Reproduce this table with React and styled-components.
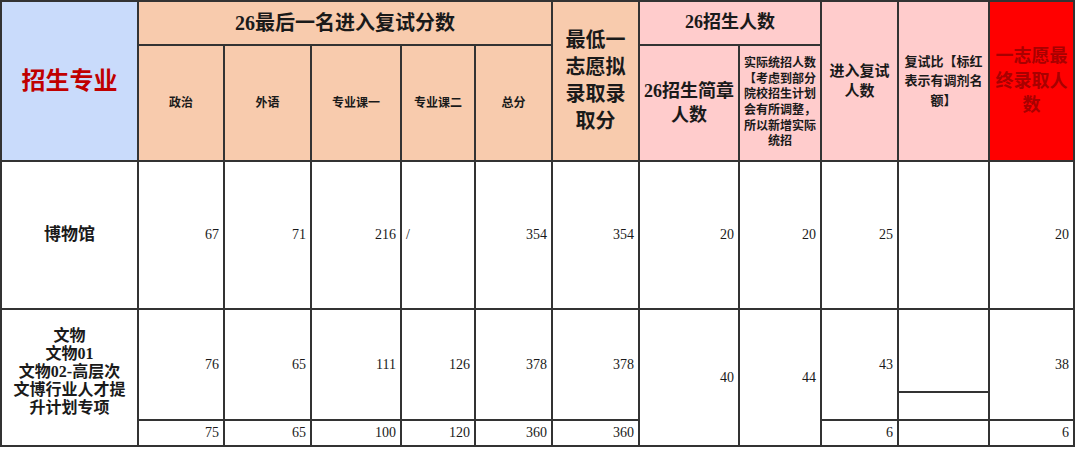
import React from 'react';
import styled, { createGlobalStyle } from 'styled-components';

const GlobalStyle = createGlobalStyle`
  html, body {
    margin: 0;
    padding: 0;
    background: #ffffff;
  }
  body {
    font-family: "Liberation Serif", "Noto Sans CJK SC", serif;
  }
`;

const BLUE = '#c9dbfb';
const PEACH = '#f8cbad';
const PINK = '#ffcccc';
const RED = '#ff0000';

const headers = [
  { col: '1', row: '1 / 3', bg: BLUE, size: 24, color: '#c00000', lines: ['招生专业'] },
  { col: '2 / 7', row: '1', bg: PEACH, size: 20, lines: ['26最后一名进入复试分数'] },
  { col: '2', row: '2', bg: PEACH, size: 12, lines: ['政治'] },
  { col: '3', row: '2', bg: PEACH, size: 12, lines: ['外语'] },
  { col: '4', row: '2', bg: PEACH, size: 12, lines: ['专业课一'] },
  { col: '5', row: '2', bg: PEACH, size: 12, lines: ['专业课二'] },
  { col: '6', row: '2', bg: PEACH, size: 12, lines: ['总分'] },
  { col: '7', row: '1 / 3', bg: PEACH, size: 20, lh: 27, lines: ['最低一', '志愿拟', '录取录', '取分'] },
  { col: '8 / 10', row: '1', bg: PINK, size: 18, lines: ['26招生人数'] },
  { col: '8', row: '2', bg: PINK, size: 18, lh: 24, lines: ['26招生简章', '人数'] },
  {
    col: '9', row: '2', bg: PINK, size: 12, lh: 15.6,
    lines: ['实际统招人数', '【考虑到部分', '院校招生计划', '会有所调整，', '所以新增实际', '统招']
  },
  { col: '10', row: '1 / 3', bg: PINK, size: 15, lh: 20, lines: ['进入复试', '人数'] },
  { col: '11', row: '1 / 3', bg: PINK, size: 13, lh: 19.5, lines: ['复试比【标红', '表示有调剂名', '额】'] },
  { col: '12', row: '1 / 3', bg: RED, size: 18, lh: 24.5, color: '#a80000', lines: ['一志愿最', '终录取人', '数'] }
];

const cells = [
  // 博物馆
  { col: '2', row: '3', value: '67' },
  { col: '3', row: '3', value: '71' },
  { col: '4', row: '3', value: '216' },
  { col: '5', row: '3', value: '/', align: 'left' },
  { col: '6', row: '3', value: '354' },
  { col: '7', row: '3', value: '354' },
  { col: '8', row: '3', value: '20' },
  { col: '9', row: '3', value: '20' },
  { col: '10', row: '3', value: '25' },
  { col: '11', row: '3', value: '' },
  { col: '12', row: '3', value: '20' },
  // 文物
  { col: '2', row: '4 / 6', value: '76' },
  { col: '3', row: '4 / 6', value: '65' },
  { col: '4', row: '4 / 6', value: '111' },
  { col: '5', row: '4 / 6', value: '126' },
  { col: '6', row: '4 / 6', value: '378' },
  { col: '7', row: '4 / 6', value: '378' },
  { col: '8', row: '4 / 7', value: '40' },
  { col: '9', row: '4 / 7', value: '44' },
  { col: '10', row: '4 / 6', value: '43' },
  { col: '11', row: '4', value: '' },
  { col: '11', row: '5', value: '' },
  { col: '12', row: '4 / 6', value: '38' },
  { col: '2', row: '6', value: '75' },
  { col: '3', row: '6', value: '65' },
  { col: '4', row: '6', value: '100' },
  { col: '5', row: '6', value: '120' },
  { col: '6', row: '6', value: '360' },
  { col: '7', row: '6', value: '360' },
  { col: '10', row: '6', value: '6' },
  { col: '11', row: '6', value: '' },
  { col: '12', row: '6', value: '6' }
];

export default function App() {
  return (
    <>
      <GlobalStyle />
      <Table>
        {headers.map((h, i) => (
          <HeadCell
            key={`head-${i}`}
            $col={h.col}
            $row={h.row}
            $bg={h.bg}
            $size={h.size}
            $lh={h.lh}
            $color={h.color}
          >
            <div>
              {h.lines.map((line, j) => (
                <Line key={j}>{line}</Line>
              ))}
            </div>
          </HeadCell>
        ))}

        <NameCell $col="1" $row="3" $size={17}>博物馆</NameCell>
        <NameCell $col="1" $row="4 / 7" $size={16} $offset={12}>
          <div>
            <Line>文物</Line>
            <Line>文物01</Line>
            <Line>文物02-高层次</Line>
            <Line>文博行业人才提</Line>
            <Line>升计划专项</Line>
          </div>
        </NameCell>

        {cells.map((c, i) => (
          <NumCell key={`cell-${i}`} $col={c.col} $row={c.row} $align={c.align}>
            {c.value}
          </NumCell>
        ))}
      </Table>
    </>
  );
}

const Table = styled.div`
  display: grid;
  grid-template-columns: 137px 86px 87px 90px 74px 77px 87px 100px 82px 77px 91px 85px;
  grid-template-rows: 44px 116px 148px 83px 28px 26px;
  width: 1075px;
  box-sizing: border-box;
  border-top: 2px solid #333;
  border-left: 2px solid #333;
`;

const Cell = styled.div`
  grid-column: ${(p) => p.$col};
  grid-row: ${(p) => p.$row};
  box-sizing: border-box;
  display: flex;
  align-items: center;
  border-right: 2px solid #333;
  border-bottom: 2px solid #333;
  min-width: 0;
  overflow: hidden;
`;

const HeadCell = styled(Cell)`
  justify-content: center;
  text-align: center;
  padding: 0 2px;
  background: ${(p) => p.$bg};
  color: ${(p) => p.$color || '#1a1a1a'};
  font-size: ${(p) => p.$size}px;
  line-height: ${(p) => (p.$lh ? `${p.$lh}px` : '1.2')};
  font-weight: 700;
  white-space: nowrap;
`;

const NameCell = styled(Cell)`
  justify-content: center;
  text-align: center;
  padding: 0 2px ${(p) => p.$offset || 0}px;
  background: #ffffff;
  color: #1a1a1a;
  font-size: ${(p) => p.$size}px;
  line-height: 18px;
  font-weight: 700;
  white-space: nowrap;
`;

const Line = styled.div`
  display: block;
`;

const NumCell = styled(Cell)`
  justify-content: ${(p) => (p.$align === 'left' ? 'flex-start' : 'flex-end')};
  padding: 0 4px;
  background: #ffffff;
  color: #1a1a1a;
  font-size: 14px;
`;
